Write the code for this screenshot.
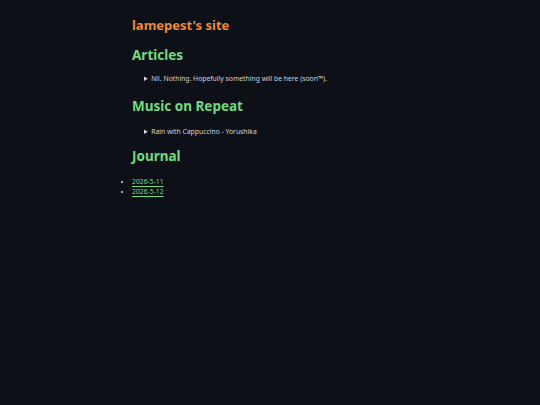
export default function App() {
  const font = { fontFamily: '"Noto Sans", "Open Sans", sans-serif' };
  return (
    <div className="min-h-[405px] w-full bg-[#0d1117] text-[#d0d7de]" style={font}>
      <div className="pl-[132px] pt-[15px]">
        <h1 className="text-[13px] font-bold leading-[20px] text-[#f0883e]">lamepest's site</h1>

        <h2 className="mt-[10px] text-[13.5px] font-bold leading-[20px] text-[#6fdc7f]">Articles</h2>
        <details className="mt-[9px] ml-[12px] text-[6.8px] leading-[10px]">
          <summary className="cursor-pointer">Nil. Nothing. Hopefully something will be here (soon™).</summary>
        </details>

        <h2 className="mt-[12px] text-[13.5px] font-bold leading-[20px] text-[#6fdc7f]">Music on Repeat</h2>
        <details className="mt-[11px] ml-[12px] text-[6.8px] leading-[10px]">
          <summary className="cursor-pointer">Rain with Cappuccino - Yorushika</summary>
        </details>

        <h2 className="mt-[9px] text-[13.5px] font-bold leading-[20px] text-[#6fdc7f]">Journal</h2>
        <ul className="mt-[11px] list-disc text-[6.8px] leading-[10px]">
          <li>
            <a href="#" className="text-[#6fdc7f] underline underline-offset-2">2026-5-11</a>
          </li>
          <li>
            <a href="#" className="text-[#6fdc7f] underline underline-offset-2">2026-5-12</a>
          </li>
        </ul>
      </div>
    </div>
  );
}
